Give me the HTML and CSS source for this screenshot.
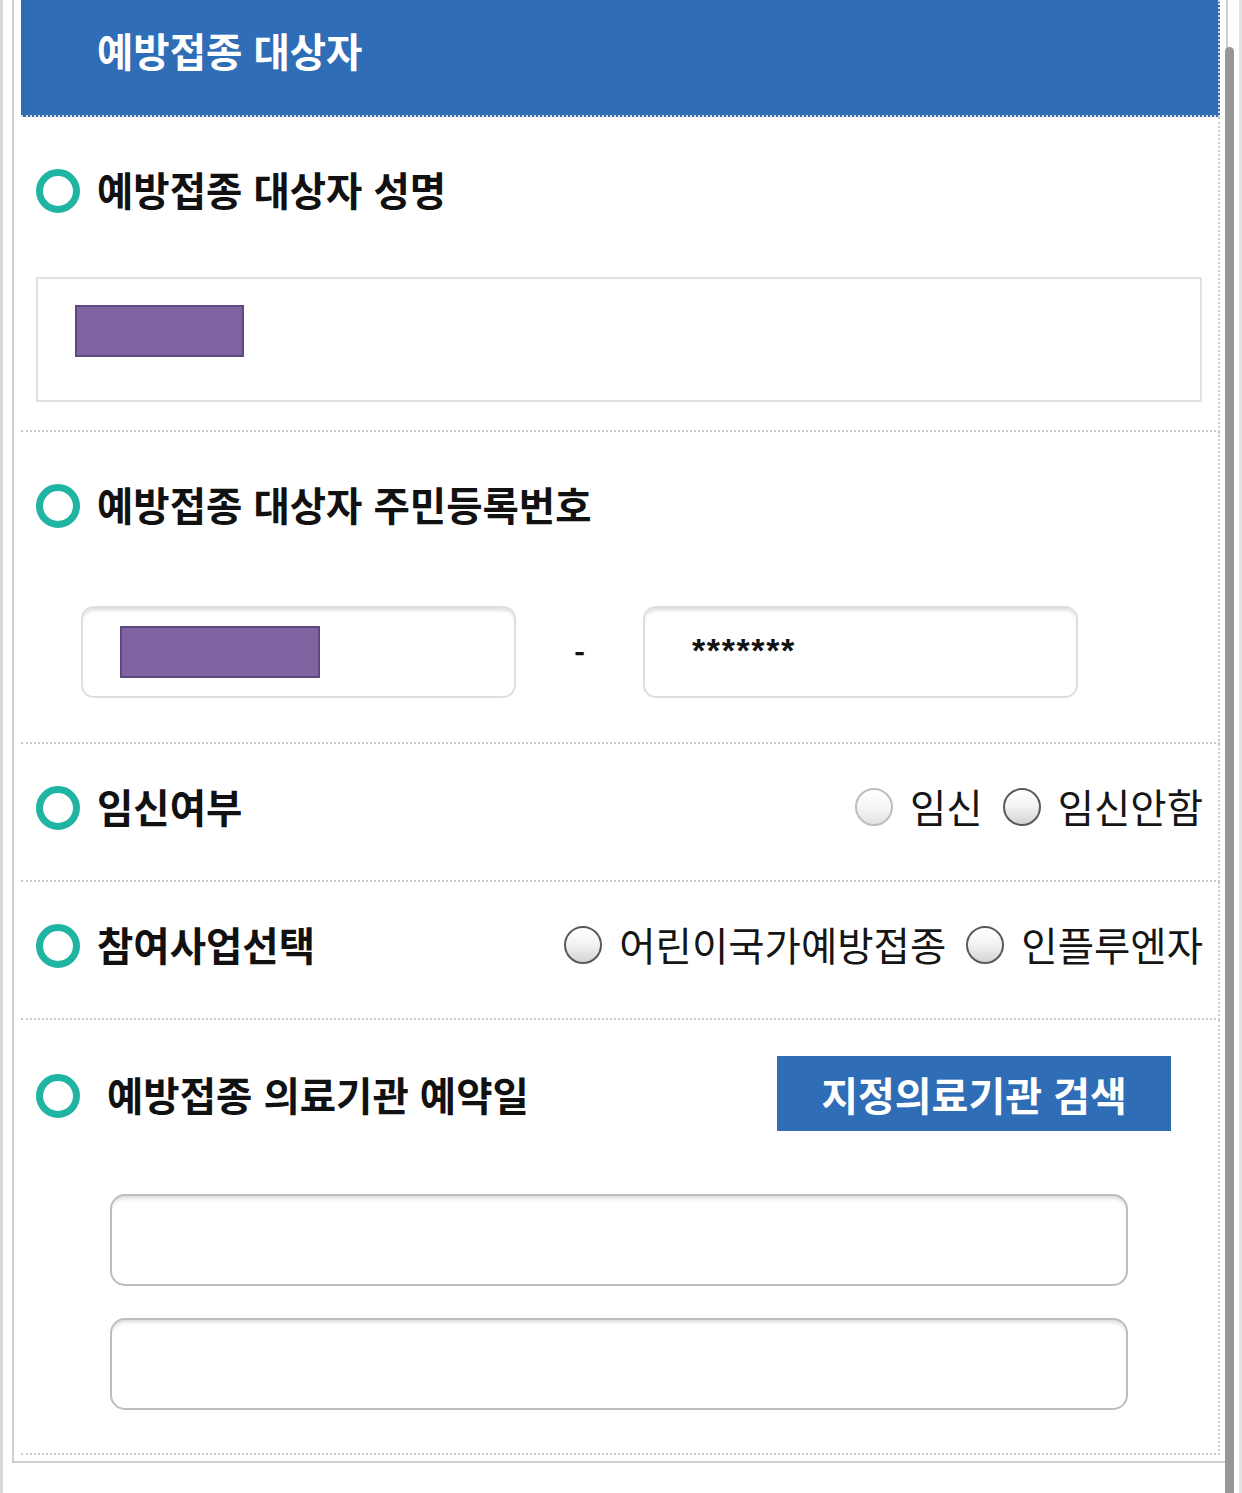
FILE: index.html
```html
<!DOCTYPE html>
<html lang="ko">
<head>
    <meta charset="UTF-8">
    <meta name="viewport" content="width=device-width, initial-scale=1.0">
    <title>예방접종 대상자</title>
    <link rel="stylesheet" href="styles.css">
</head>
<body>
    <div class="page">
        <div class="frame">
            <div class="form">
                <h2 class="form-head">예방접종 대상자</h2>

                <div class="row row-name">
                    <div class="row-title">
                        <span class="ring"></span>
                        <h3>예방접종 대상자 성명</h3>
                    </div>
                    <div class="field-flat">
                        <span class="mask mask-name"></span>
                    </div>
                </div>

                <div class="row row-id">
                    <div class="row-title">
                        <span class="ring"></span>
                        <h3>예방접종 대상자 주민등록번호</h3>
                    </div>
                    <div class="id-fields">
                        <div class="field-round">
                            <span class="mask mask-id"></span>
                        </div>
                        <span class="dash">-</span>
                        <div class="field-round">
                            <span class="secret">*******</span>
                        </div>
                    </div>
                </div>

                <div class="row row-inline">
                    <div class="row-title">
                        <span class="ring"></span>
                        <h3>임신여부</h3>
                    </div>
                    <div class="choices">
                        <label class="choice"><input type="radio" name="preg" class="radio radio-light"><span>임신</span></label>
                        <label class="choice"><input type="radio" name="preg" class="radio"><span>임신안함</span></label>
                    </div>
                </div>

                <div class="row row-inline">
                    <div class="row-title">
                        <span class="ring"></span>
                        <h3>참여사업선택</h3>
                    </div>
                    <div class="choices">
                        <label class="choice"><input type="radio" name="biz" class="radio"><span>어린이국가예방접종</span></label>
                        <label class="choice"><input type="radio" name="biz" class="radio"><span>인플루엔자</span></label>
                    </div>
                </div>

                <div class="row row-clinic">
                    <div class="clinic-head">
                        <div class="row-title">
                            <span class="ring"></span>
                            <h3 class="wide">예방접종 의료기관 예약일</h3>
                        </div>
                        <button type="button" class="search-btn">지정의료기관 검색</button>
                    </div>
                    <div class="field-round field-clinic"></div>
                    <div class="field-round field-clinic"></div>
                </div>
            </div>
        </div>
        <div class="scroll-thumb"></div>
    </div>
</body>
</html>
```

FILE: styles.css
```css
* {
    margin: 0;
    padding: 0;
    box-sizing: border-box;
}

body {
    background: #fff;
    color: #111;
    font-family: "Noto Sans CJK KR", "Noto Sans", sans-serif;
}

.page {
    position: relative;
    min-height: 1493px;
    border-left: 3px solid #d6d6d6;
    border-right: 3px solid #e2e2e2;
    padding-left: 9px;
    padding-right: 11px;
    overflow: hidden;
}

.frame {
    border-left: 2px solid #cfcfcf;
    border-right: 2px solid #cfcfcf;
    border-bottom: 2px solid #cfcfcf;
    padding: 0 6px 6px 7px;
}

.form-head {
    height: 117px;
    padding: 25px 0 0 76px;
    background: #2f6db7;
    border-right: 2px dotted #dcdcdc;
    border-bottom: 2px dotted #dcdcdc;
    color: #fff;
    font-size: 39.5px;
    font-weight: bold;
    line-height: 50px;
}

.row {
    padding: 47px 18px 28px 15px;
    border-right: 2px dotted #cacaca;
    border-bottom: 2px dotted #cacaca;
}

.row-title {
    display: flex;
    align-items: center;
}

.row-title h3 {
    margin-left: 17px;
    font-size: 39.5px;
    font-weight: bold;
    line-height: 50px;
    color: #111;
    white-space: nowrap;
}

.row-title h3.wide {
    margin-left: 27px;
}

.ring {
    width: 44px;
    height: 44px;
    margin-top: 4px;
    border: 7px solid #20b4a2;
    border-radius: 50%;
    flex-shrink: 0;
}

/* name */
.field-flat {
    height: 125px;
    margin: 63px -2px 0 0;
    padding: 26px 37px;
    border: 2px solid #e1e1e1;
}

.mask {
    display: block;
    height: 52px;
    background: #8064a2;
    border: 2px solid #5e4a7f;
}

.mask-name {
    width: 169px;
}

.mask-id {
    width: 200px;
}

/* resident number */
.row-id {
    padding-bottom: 44px;
}

.id-fields {
    display: flex;
    align-items: center;
    margin: 77px 0 0 45px;
}

.field-round {
    display: flex;
    align-items: center;
    width: 435px;
    height: 92px;
    padding-left: 37px;
    border: 2px solid #dedede;
    border-radius: 13px;
    background: #fff;
    box-shadow: inset 0 5px 4px -3px rgba(0, 0, 0, 0.16);
}

.dash {
    width: 127px;
    text-align: center;
    font-size: 30px;
    font-weight: bold;
    line-height: 1;
}

.secret {
    margin-left: 10px;
    margin-top: -4px;
    font-family: "Liberation Sans", Arial, sans-serif;
    font-size: 34px;
    font-weight: bold;
    letter-spacing: 1.6px;
}

/* radio rows */
.row-inline {
    display: flex;
    justify-content: space-between;
    align-items: center;
    padding-top: 37px;
    padding-bottom: 49px;
}

.choices {
    display: flex;
    align-items: center;
    gap: 20px;
    margin-right: -3px;
}

.choice {
    display: flex;
    align-items: center;
    gap: 17px;
    font-size: 39.5px;
    line-height: 50px;
    color: #151515;
    white-space: nowrap;
}

.radio {
    appearance: none;
    -webkit-appearance: none;
    width: 38px;
    height: 38px;
    margin-top: 2px;
    border: 2px solid #5a5a5a;
    border-radius: 50%;
    background: linear-gradient(#ffffff, #f4f4f4 45%, #d4d4d4);
}

.radio-light {
    border-color: #bdbdbd;
    background: linear-gradient(#ffffff, #f6f6f6 50%, #e2e2e2);
}

/* clinic */
.row-clinic {
    padding-top: 36px;
    padding-bottom: 43px;
}

.clinic-head {
    display: flex;
    justify-content: space-between;
    align-items: center;
}

.search-btn {
    width: 394px;
    height: 75px;
    margin-right: 29px;
    border: none;
    background: #2f6db7;
    color: #fff;
    font-family: inherit;
    font-size: 40px;
    font-weight: bold;
    line-height: 1;
    cursor: pointer;
}

.field-clinic {
    width: 1018px;
    margin: 63px 0 0 74px;
    border-color: #bdbdbd;
    border-radius: 15px;
}

.field-clinic + .field-clinic {
    margin-top: 32px;
}

.scroll-thumb {
    position: absolute;
    top: 47px;
    bottom: 0;
    left: 1222px;
    width: 9px;
    background: #979797;
    border-radius: 5px 5px 0 0;
}
```
